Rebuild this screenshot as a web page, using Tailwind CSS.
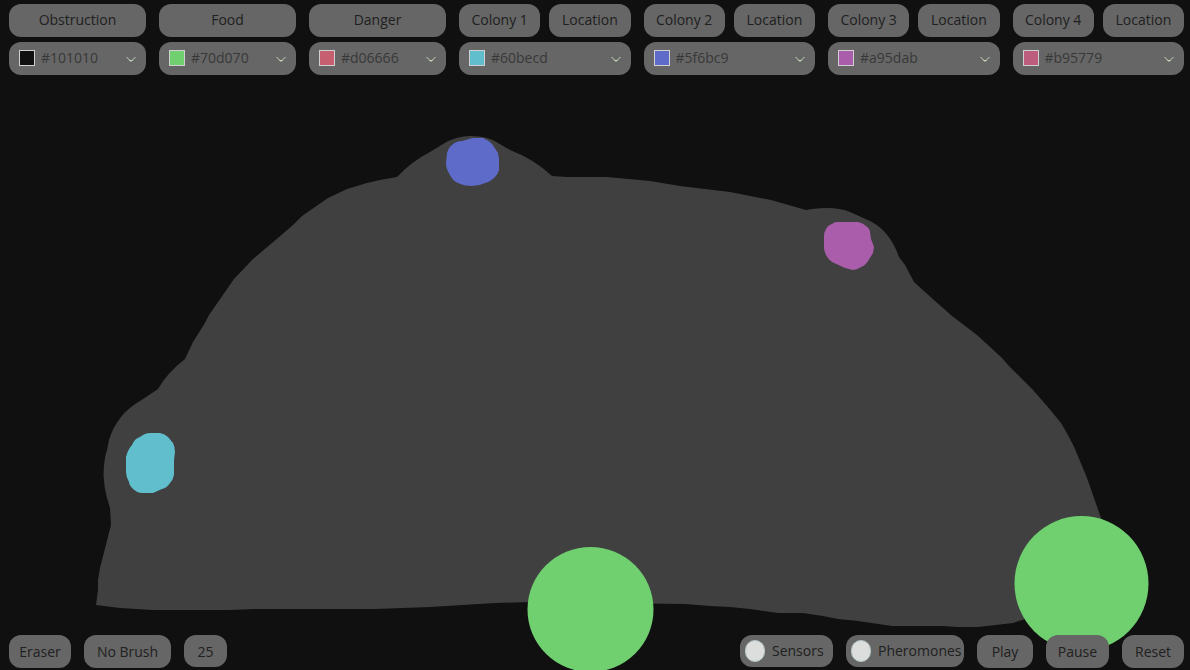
<!DOCTYPE html>
<html lang="en">
<head>
<meta charset="utf-8">
<title>Ant Colony Simulation</title>
<script src="https://cdn.jsdelivr.net/npm/@tailwindcss/browser@4"></script>
</head>
<body class="relative flex min-h-screen flex-col justify-between overflow-hidden bg-[#101010] font-['Open_Sans','Noto_Sans',sans-serif] text-sm text-[#202020]">
  <!-- Simulation canvas -->
  <svg class="absolute inset-0 h-full w-full" viewBox="0 0 1190 670" preserveAspectRatio="xMidYMid slice" aria-hidden="true">
    <path fill="#404040" d="M96 605 L98 590 V580 L100 568 L111 525 L110 508 L107 498 Q104 487 103.500 475 Q104 458 107 450 L109 440 Q117 414 140 401 L158 389 Q167 373 185 359 L193 342 L205 323 L209 315 L234 279 L253 259 L272 243 L293 225 L302 216 L328 198 L347 189 L367 183 L380 180 L397 177 Q412 161 430 152 L443 144 Q456 136 471 136 Q488 136 498 143 L510 150 Q534 159 552 176 L567 177 L607 177 L650 181 L680 186 L730 192 L771 200 L806 210 L812 209 Q836 206 850 212 L870 221 Q890 231 899 257 L905 265 L914 282 L935 301 L952 316 L977 335 L1002 358 L1008 365 L1033 390 L1047 406 L1061 423 Q1070 438 1075 449 L1087 478 L1101 518 L1060 600 L1025 619 L1013 623 L978 627 H957 L943 626 H892 L858 621 L838 619 L823 616 L803 613 H778 L750 609 L730 607 L710 606 L685 604 L530 602 L495 603 L430 607 L375 609 H255 L230 610 H153 L120 608 Z"/>
    <path fill="#5f6bc9" d="M446 163 L447 153 Q449 147 452 145 Q456 141 462 141 L473 138 H483 Q488 140 492 144 L498 153 L499 159 V170 Q498 174 495 177 Q490 182 485 183 Q479 186 472 186 Q464 186 458 183 Q452 180 450 175 Q446 169 446 163 Z"/>
    <path fill="#60becd" d="M126 457 Q128 449 132 445 Q135 438 140 437 Q145 433 150 433 H160 Q165 434 168 437 L173 443 Q175 447 175 452 L174 460 V475 Q173 480 170 483 Q167 488 162 489 L153 493 H141 Q136 492 133 489 Q129 485 129 482 Q126 477 126 472 Z"/>
    <path fill="#a95dab" d="M824 237 Q824 232 826 229 Q828 225 832 224 Q834 222 837 222 H858 Q863 223 866 226 Q870 229 870 232 L871 239 L874 247 L873 253 L868 261 Q865 266 861 267 Q857 270 853 270 L845 268 L832 262 Q828 259 826 255 Q824 251 824 248 Z"/>
    <ellipse fill="#70d070" cx="590.500" cy="609.500" rx="63" ry="62.500"/>
    <ellipse fill="#70d070" cx="1081.500" cy="583.500" rx="67" ry="67.500"/>
  </svg>

  <header class="relative grid grid-cols-[274fr_274fr_274fr_343fr_343fr_343fr_343fr] gap-x-[13px] pt-1 pr-1.5 pl-[9px]">
    <div class="grid gap-[5px]">
      <button class="h-[33px] rounded-xl bg-[#666] pb-0.5">Obstruction</button>
      <div class="relative flex h-[33px] items-center">
        <select aria-label="Obstruction color" class="h-full w-full appearance-none rounded-xl bg-[#666] pb-0.5 pl-8 text-[#383838]"><option>#101010</option></select>
        <span class="pointer-events-none absolute top-2 left-2.5 size-4 border border-[#d0d0d0] bg-[#101010]"></span>
        <svg class="pointer-events-none absolute right-2.5 h-2 w-2.5" viewBox="0 0 10 8" fill="none" stroke="#c4d8bc"><path d="M.5 2 5 6.500 9.500 2M3.500 5.500H6.500"/></svg>
      </div>
    </div>
    <div class="grid gap-[5px]">
      <button class="h-[33px] rounded-xl bg-[#666] pb-0.5">Food</button>
      <div class="relative flex h-[33px] items-center">
        <select aria-label="Food color" class="h-full w-full appearance-none rounded-xl bg-[#666] pb-0.5 pl-8 text-[#383838]"><option>#70d070</option></select>
        <span class="pointer-events-none absolute top-2 left-2.5 size-4 border border-[#d0d0d0] bg-[#70d070]"></span>
        <svg class="pointer-events-none absolute right-2.5 h-2 w-2.5" viewBox="0 0 10 8" fill="none" stroke="#c4d8bc"><path d="M.5 2 5 6.500 9.500 2M3.500 5.500H6.500"/></svg>
      </div>
    </div>
    <div class="grid gap-[5px]">
      <button class="h-[33px] rounded-xl bg-[#666] pb-0.5">Danger</button>
      <div class="relative flex h-[33px] items-center">
        <select aria-label="Danger color" class="h-full w-full appearance-none rounded-xl bg-[#666] pb-0.5 pl-8 text-[#383838]"><option>#d06666</option></select>
        <span class="pointer-events-none absolute top-2 left-2.5 size-4 border border-[#d0d0d0] bg-[#c66070]"></span>
        <svg class="pointer-events-none absolute right-2.5 h-2 w-2.5" viewBox="0 0 10 8" fill="none" stroke="#c4d8bc"><path d="M.5 2 5 6.500 9.500 2M3.500 5.500H6.500"/></svg>
      </div>
    </div>
    <div class="grid gap-[5px]">
      <div class="grid grid-cols-2 gap-[9px]">
        <button class="h-[33px] rounded-xl bg-[#666] pb-0.5">Colony 1</button>
        <button class="h-[33px] rounded-xl bg-[#666] pb-0.5">Location</button>
      </div>
      <div class="relative flex h-[33px] items-center">
        <select aria-label="Colony 1 color" class="h-full w-full appearance-none rounded-xl bg-[#666] pb-0.5 pl-8 text-[#383838]"><option>#60becd</option></select>
        <span class="pointer-events-none absolute top-2 left-2.5 size-4 border border-[#d0d0d0] bg-[#60becd]"></span>
        <svg class="pointer-events-none absolute right-2.5 h-2 w-2.5" viewBox="0 0 10 8" fill="none" stroke="#c4d8bc"><path d="M.5 2 5 6.500 9.500 2M3.500 5.500H6.500"/></svg>
      </div>
    </div>
    <div class="grid gap-[5px]">
      <div class="grid grid-cols-2 gap-[9px]">
        <button class="h-[33px] rounded-xl bg-[#666] pb-0.5">Colony 2</button>
        <button class="h-[33px] rounded-xl bg-[#666] pb-0.5">Location</button>
      </div>
      <div class="relative flex h-[33px] items-center">
        <select aria-label="Colony 2 color" class="h-full w-full appearance-none rounded-xl bg-[#666] pb-0.5 pl-8 text-[#383838]"><option>#5f6bc9</option></select>
        <span class="pointer-events-none absolute top-2 left-2.5 size-4 border border-[#d0d0d0] bg-[#5f6bc9]"></span>
        <svg class="pointer-events-none absolute right-2.5 h-2 w-2.5" viewBox="0 0 10 8" fill="none" stroke="#c4d8bc"><path d="M.5 2 5 6.500 9.500 2M3.500 5.500H6.500"/></svg>
      </div>
    </div>
    <div class="grid gap-[5px]">
      <div class="grid grid-cols-2 gap-[9px]">
        <button class="h-[33px] rounded-xl bg-[#666] pb-0.5">Colony 3</button>
        <button class="h-[33px] rounded-xl bg-[#666] pb-0.5">Location</button>
      </div>
      <div class="relative flex h-[33px] items-center">
        <select aria-label="Colony 3 color" class="h-full w-full appearance-none rounded-xl bg-[#666] pb-0.5 pl-8 text-[#383838]"><option>#a95dab</option></select>
        <span class="pointer-events-none absolute top-2 left-2.5 size-4 border border-[#d0d0d0] bg-[#a95dab]"></span>
        <svg class="pointer-events-none absolute right-2.5 h-2 w-2.5" viewBox="0 0 10 8" fill="none" stroke="#c4d8bc"><path d="M.5 2 5 6.500 9.500 2M3.500 5.500H6.500"/></svg>
      </div>
    </div>
    <div class="grid gap-[5px]">
      <div class="grid grid-cols-2 gap-[9px]">
        <button class="h-[33px] rounded-xl bg-[#666] pb-0.5">Colony 4</button>
        <button class="h-[33px] rounded-xl bg-[#666] pb-0.5">Location</button>
      </div>
      <div class="relative flex h-[33px] items-center">
        <select aria-label="Colony 4 color" class="h-full w-full appearance-none rounded-xl bg-[#666] pb-0.5 pl-8 text-[#383838]"><option>#b95779</option></select>
        <span class="pointer-events-none absolute top-2 left-2.5 size-4 border border-[#d0d0d0] bg-[#bd5d7d]"></span>
        <svg class="pointer-events-none absolute right-2.5 h-2 w-2.5" viewBox="0 0 10 8" fill="none" stroke="#c4d8bc"><path d="M.5 2 5 6.500 9.500 2M3.500 5.500H6.500"/></svg>
      </div>
    </div>
  </header>

  <footer class="relative flex items-start justify-between pr-1.5 pb-0.5 pl-[9px]">
    <div class="flex items-start gap-[13px]">
      <button class="h-[33px] w-[62px] rounded-xl bg-[#666]">Eraser</button>
      <button class="h-[33px] w-[87px] rounded-xl bg-[#666]">No Brush</button>
      <input aria-label="Brush size" value="25" class="h-8 w-[43px] rounded-xl bg-[#666] text-center">
    </div>
    <div class="flex items-start gap-[13px]">
      <label class="flex h-8 w-[93px] items-center gap-[7px] rounded-xl bg-[#666] pl-[5px]"><input type="checkbox" class="h-[22px] w-5 shrink-0 appearance-none rounded-full border border-[#b4c4c6] bg-[#dcdedd]">Sensors</label>
      <label class="flex h-8 w-[118px] items-center gap-[7px] rounded-xl bg-[#666] pl-[5px]"><input type="checkbox" class="h-[22px] w-5 shrink-0 appearance-none rounded-full border border-[#b4c4c6] bg-[#dcdedd]">Pheromones</label>
      <button class="h-[33px] w-14 rounded-xl bg-[#666]">Play</button>
      <button class="h-[33px] w-[63px] rounded-xl bg-[#666]">Pause</button>
      <button class="h-[33px] w-[62px] rounded-xl bg-[#666]">Reset</button>
    </div>
  </footer>
</body>
</html>
